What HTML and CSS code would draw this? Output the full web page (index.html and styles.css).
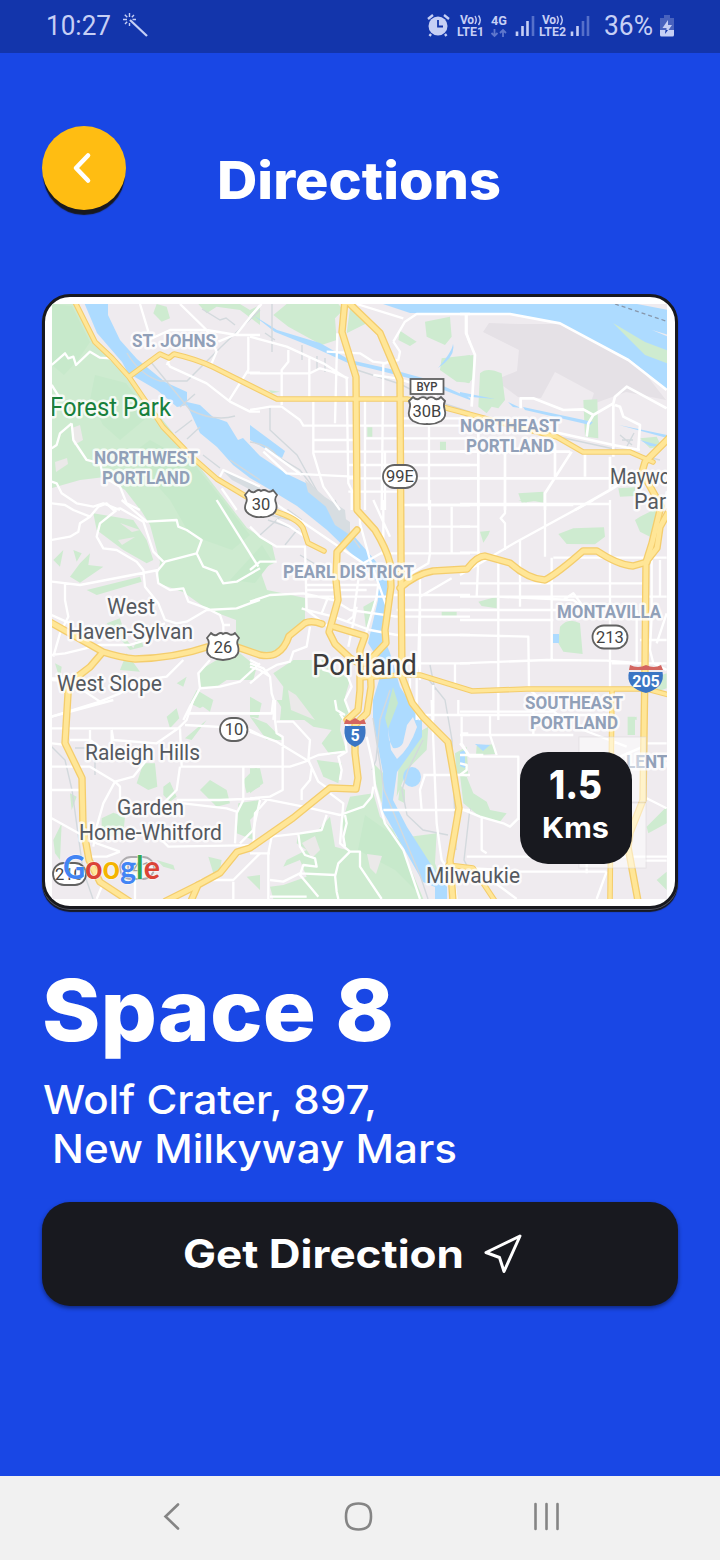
FILE: index.html
```html
<!DOCTYPE html>
<html lang="en">
<head>
<meta charset="utf-8">
<title>Directions</title>
<link rel="stylesheet" href="styles.css">
</head>
<body>
<div class="phone">
  <div class="status">
    <span class="clock"><svg width="66" height="30"><text x="0" y="24" textLength="65" lengthAdjust="spacingAndGlyphs">10:27</text></svg></span>
    <svg class="wand" width="28" height="28" viewBox="0 0 28 28"><path class="rays" d="M7.500 1v4M7.500 11v3M1 7.500h4M10.500 7.500H14M2.800 2.800l2.500 2.500M12 3 9.800 5.200M3 12l2.200-2.200"/><path class="stick" d="M8 8l17 16"/></svg>
    <svg class="indicators" width="250" height="53" viewBox="425 0 250 53">
      <g class="alarm"><circle cx="438" cy="26" r="9.500"/><path class="alarm-line" d="M428 19l5-4M449 19l-5-4M431 34l-1.500 2M445 34l1.500 2"/><path class="alarm-hand" d="M438 20v6.500h5"/></g>
      <g class="tiny"><text x="460" y="24" textLength="14">Vo</text><text x="457" y="36" textLength="27" lengthAdjust="spacingAndGlyphs">LTE1</text><text x="491" y="25" textLength="16" lengthAdjust="spacingAndGlyphs">4G</text><text x="542" y="24" textLength="14">Vo</text><text x="539" y="36" textLength="27" lengthAdjust="spacingAndGlyphs">LTE2</text></g>
      <path class="waves" d="M475 16q2.500 4 0 8M478.500 15.500q3.500 4.500 0 9.500M557 16q2.500 4 0 8M560.500 15.500q3.500 4.500 0 9.500"/>
      <path class="dim-line" d="M494.500 29v7M491.500 33l3 3 3-3M503 37v-7M500 33l3-3 3 3"/>
      <path class="bar" d="M517 36v-4.500M522.500 36V26M527.500 36V21M572 36v-4.500M577.500 36V26"/>
      <path class="bar dim" d="M533 36V16M583 36V21M588 36V16"/>
      <text class="percent" x="604" y="35" textLength="49" lengthAdjust="spacingAndGlyphs">36%</text>
      <path class="batt dim-fill" d="M664 15h6v3h4v12h-14V18h4z"/><path class="batt" d="M660 30h14v5q0 1.500-1.500 1.500h-11q-1.500 0-1.500-1.500z"/><path class="batt" d="M668 20l-5.500 8h4v2h2l3.500-5h-4z"/><path class="bolt-low" d="M665.500 30h2.500l-3 4z"/>
    </svg>
  </div>

  <header class="header">
    <button class="back" aria-label="Back"><svg width="30" height="40" viewBox="0 0 30 40"><path d="M20 7.500 8 20l12 12.500"/></svg></button>
    <h1 class="title"><svg width="300" height="70"><text x="0" y="47.500" textLength="284" lengthAdjust="spacingAndGlyphs">Directions</text></svg></h1>
  </header>

  <section class="card">
    <svg class="map" width="615" height="595" viewBox="52 304 615 595">
      <defs>
        <g id="freeways">
          <path d="M345 300 342 332 356 377 357 510 375 530Q386 548 390 563L391 587 385 630 386 643 370 660 371 687 367 713 355 725 355 753 358 778 356 789 330 788 293 818 250 848 237 852 220 873 198 885 191 901"/>
          <path d="M198 885 166 901M345 300 350 304 380 333 400 380 401 557 402 677 412 703 423 717 448 742 453 770 459 808 450 860 453 901"/>
          <path d="M400 588Q416 574 433 571L467 569Q477 556 485 556L510 563Q528 579 545 580 558 573 583 551H597Q618 565 633 566L647 562"/>
          <path d="M669 438 645 462 642 472 652 490 661 506 652 543 646 562 645 667 643 800 630 833 628 847 638 901"/>
          <path d="M669 511 660 527 657 548 646 562"/>
          <path d="M50 622 103 652Q122 658 135 659 175 658 207 647H237L260 655Q271 657 277 653 285 648 289 636L305 623Q312 620 322 624"/>
          <path d="M102 653 90 667 77 677Q68 685 68 694L65 743 82 778 83 827 89 860 100 882 129 901"/>
          <path d="M357 530 337 552 336 580 338 600 329 632 335 644 350 658 360 664 370 662M335 627 365 636 360 650 360 690 358 710 347 720"/>
        </g>
        <g id="arterials">
          <path d="M74 300 95 342 112 358 129 377 155 415 163 427 192 457 217 479 247 497M277 512Q298 519 303 528L308 543 324 551"/>
          <path d="M130 376 160 354 169 358 174 354Q196 359 213 367L277 399H407L435 405 517 427 557 437 583 452H630L653 462"/>
          <path d="M360 678 400 675 420 675 472 691 527 689H647L669 695M612 689 610 901M448 865 473 868 495 901"/>
        </g>
      </defs>
      <rect class="land" x="50" y="300" width="620" height="602"/>

      <path class="urban" d="M483 332 489 323 518 324 560 324 600 345 640 367 666 400 626 392 590 405 594 393 555 372 541 398 518 397 495 380 517 371 519 350z"/>

      <g class="park">
        <path d="M50 300H74L95 342 129 377 192 457 247 528 272 545 276 562 260 570 267 590 305 598 305 620 285 640 275 655 236 652 236 620 207 609 183 592 157 583 160 562 150 525 142 512 125 490 105 477 80 480 52 488z"/>
        <g transform="translate(40 290) scale(.3333)"><path d="M350 42 380 50 390 85 365 95 340 70zM475 42H600L630 60 660 45V105L600 60 530 50 500 70z"/></g>
        <g transform="translate(250 290) scale(.3333)"><path d="M70 75 110 42H265L280 60 255 85 260 150 215 165 115 110zM300 55 330 65 350 100 290 130zM525 95 600 80 605 140 585 165 530 140zM450 122 500 155 480 168 445 150zM575 205 660 195V278L620 275 570 240zM352 412h15v28h-15zM570 455h18v25h-18zM55 300 90 305 65 310z"/></g>
        <g transform="translate(460 290) scale(.3333)"><path d="M0 200 40 195 40 265 25 280 0 270zM60 250Q80 230 125 250L135 330 115 355 95 350 80 370 55 350zM370 330 412 328 415 445 375 440zM540 445 590 440 605 470 570 475zM175 610 250 605V630L185 638zM475 595 525 592V618L480 620z"/></g>
        <g transform="translate(40 500) scale(.3333)"><path d="M160 40 280 60 320 120 340 180 320 190 250 150 170 90zM40 180 70 150 60 200zM100 150 125 160 110 185zM90 230 120 190 150 160 145 195 190 200 120 248zM140 270 300 230 305 245 170 285zM200 370 240 355 260 420 280 445 300 400 310 440 270 450zM240 510 260 460 300 515zM480 510 530 480 600 460 650 500 640 540 560 540 530 560 480 560zM470 570 520 600 480 625 450 610zM45 490 65 500 60 540zM410 550 440 530 430 560z"/></g>
        <g transform="translate(250 500) scale(.3333)"><path d="M70 520 130 480 220 480 300 540 285 590 300 640 285 660H90L100 560zM0 590 35 610 25 655 0 650zM575 335 620 335V352L575 348zM340 320 375 300 350 400z"/></g>
        <g transform="translate(460 500) scale(.3333)"><path d="M295 102 340 85 432 82 435 110 405 133 320 132zM60 95 90 92 85 105 70 128zM55 305 110 290V325L65 318zM300 380Q325 350 360 370L368 462 310 455 295 430zM540 50 600 20 570 110 540 95 525 60zM590 530 620 520V565L590 575zM175 0H200V8zM505 655 530 650V660zM205 0H250V8z"/></g>
        <g transform="translate(40 700) scale(.3333)"><path d="M380 50 410 25 418 55 390 85zM310 190 345 190 352 260 325 270 290 250zM370 260 390 245 410 290 390 305 370 285zM185 355 220 338 255 350 250 400 210 410 185 380zM500 60 455 120 435 115zM510 240 560 270 570 310 530 320 480 270zM610 240 650 200 660 260 620 280zM595 310 660 300V330L630 360 640 420 590 400zM505 470 545 480 540 510 520 520zM620 530 660 525V570zM40 420 65 370 60 480 45 460zM90 280 110 290 95 330zM475 10 520 0 510 35zM350 480 400 495 405 510 370 500z"/></g>
        <g transform="translate(250 700) scale(.3333)"><path d="M80 0H280L270 90 290 155 240 165 215 130 245 90 190 80 150 50 100 30zM300 290 370 280 390 350 430 390 480 500 520 597H70L60 560 100 555 170 530 150 480 100 500 110 480 170 450 140 430 145 400 200 395 240 350 255 440 290 450 275 370zM200 180 275 190 265 250 220 230zM0 205 30 205 40 250 0 280zM0 50 50 70 100 120 50 120zM480 410 560 400 555 490 570 530 540 530zM500 100 535 80 530 150 480 200 460 240 440 290 445 210zM370 190 400 220 395 310 375 240zM450 255 465 270 465 310 445 300zM615 160 650 140 655 230 620 220z"/></g>
        <g transform="translate(460 700) scale(.3333)"><path d="M0 225 20 230 40 280 80 305 90 330 140 340 120 365 60 350 10 310zM50 138 100 133 105 162 48 165zM503 50 525 50V105H503zM560 380 620 320V370L565 400zM590 540 620 515V570z"/></g>
      </g>
      <g class="forest">
        <path d="M50 304 72 306 90 342 78 360 64 375 52 365zM95 375 126 383 150 415 120 440 103 425 90 400zM130 455 150 440 195 465 250 535 232 550 190 535 170 500zM230 580 262 545 272 561 255 583zM365 815 400 840 420 895 395 870 358 850z"/>
      </g>
      <g class="cutout"><path d="M72 428 80 425 83 440 74 445zM55 462 67 458 68 464 56 472zM367 854 382 856 376 874 370 868zM288 690 296 695 315 720 291 710zM302 843 315 836 320 850 312 858zM120 523 140 530 132 532zM118 540 135 537 122 545z"/></g>

      <g class="water">
        <path d="M83 300 97 333 122 362 128 373 157 390 177 407 187 405 200 433 217 447 233 465 250 478 274 492 297 506 327 530 360 562 378 583V600L368 643 383 667 373 700V720L383 773 382 810 423 882 435 887V901H447V887L430 863 407 827 393 800 397 772 422 737V715L417 713 400 687 390 653 382 633 387 600 388 577 373 558 347 528 327 504 310 485 287 474 260 456 243 438 238 440 227 422 213 417 200 405 187 402V392L165 382 137 359 120 340 108 315V300z"/>
        <path d="M250 425 285 451 282 458 250 440zM383 300V304L410 313H470L510 314 560 323 630 360 669 391V322L667 304V300z"/>
        <path d="M253 315 277 330 320 343 350 360 390 369 430 380 470 398 470 400 420 381 385 372 348 363 315 348 275 332zM438 368Q452 352 453 344 456 356 438 368zM523 407 593 422 590 425 525 410zM619 425 667 435V438zM640 440 666 447 650 446zM460 392 495 399 460 396zM508 402 521 408 513 407z"/>
        <ellipse cx="412" cy="777" rx="9" ry="10"/><path d="M553 634h6v9h-6zM460 752 465 750V768L460 766zM460 758V768M475 744 490 745 483 751zM461 755 463 754"/>
      </g>
      <path class="isle" d="M393 687 398 703 388 729 385 718z"/><path class="land" d="M388 728 389 740 393 748Q400 749 403 743L407 725 413 717 417 727Q410 748 397 759L391 750z"/>
      <path class="park" d="M613 323 645 342 669 351V364L645 355z"/>
      <path class="land" d="M637 304 669 310V300zM652 330 669 337V335z"/><path class="dash" d="M615 304 669 322"/>

      <g class="grey">
        <path d="M127 353Q140 375 160 381H187L221 347 260 310M202 309 220 320 226 318 235 325M180 407 195 394M200 427 187 439M203 455 220 468M175 433 192 420M230 460 260 480M150 361 190 410Q215 422 235 416"/>
        <path d="M272 300V352M265 333 275 340M302 345V360M250 442Q270 445 277 456L300 470 315 490 335 515 347 530 360 548M270 408V430L297 455 322 500 340 510M325 358V372M317 356V370M357 370 400 384 430 399 470 412M250 510 290 520M268 520 297 530 285 545M260 535 288 510 302 520M300 555 325 570M335 500 350 537"/>
        <path d="M541 433 605 447 660 460M620 435 632 445M634 433 626 448M622 440H633M425 675 445 700 452 740 456 850M423 740 408 770 402 790 407 815 423 830 448 835M430 665 435 690M390 690 380 720 376 760 372 770M470 808 464 860 472 875M373 718 384 790 420 875 428 899M40 735 65 760 72 790 83 870 93 899M75 748H95V775"/>
      </g>
      <path class="yards" d="M305 480 325 497 345 510 347 530 330 510 308 492zM222 470 260 487V495L232 480zM325 505 350 522 350 535 335 525z"/>

      <g class="street" transform="translate(40 290) scale(.3333)"><path d="M300 42 325 125M420 42 500 120 530 185 515 220M325 150 390 120 500 120 590 135H660M535 155 590 132 660 45M625 140V240L565 335M620 248H660M382 215 390 230 500 280 570 335 630 365H660M380 225 395 200M35 225 75 190 85 205 100 200 108 225 150 185 180 203 210 205 240 230M35 285 60 325M95 400 60 430 50 465 35 475M95 400 100 450 140 510 180 520 190 560 240 590 260 640 300 660M540 560 550 540 660 590M545 595 590 660M35 575 50 580 65 610 110 640 160 650 190 640 240 660"/></g>
      <g class="street" transform="translate(250 290) scale(.3333)"><path d="M0 80 35 42M0 140 110 170 220 220 290 265 295 580 305 600V660M320 42 460 85M430 155 465 95 500 72H660M430 155 450 185 445 210 400 220 395 660M115 180V215L95 240V345M178 205V320M0 250H180L210 235 245 245 295 265M262 130 255 400M230 185 330 190 370 215 410 220M370 255 440 265 520 290 560 320M650 70V130L660 160M0 360 60 350 95 350 150 390 160 407H295M190 335V490L220 590 270 660M220 407H660M190 450H310M190 485H660M295 525H660M295 565H660M295 605H450M40 485 110 550 310 560M45 475 155 555M345 330V660M405 485V660M537 400V660M480 645H660M345 445H660M450 385H660"/></g>
      <g class="street wide" transform="translate(460 290) scale(.3333)"><path d="M0 72H150L300 100 505 210 620 300M18 75V130L45 195 35 350M182 355V325L220 325 310 360 370 358 400 375 460 340 465 320 500 290 620 355M400 375 385 400 380 440M465 345 480 350 490 380 540 405 535 475M460 340V500M160 405 300 430 460 465 540 480M0 485H330M335 485 255 610V660M55 430V660M135 480V660M285 460V560M0 525H55M0 565H460M0 645H340M375 490V560M450 500V600M345 660 450 600 475 585"/></g>
      <g class="street" transform="translate(40 500) scale(.3333)"><path d="M35 10 75 15 100 30 150 50 120 70 115 95 90 110 35 120M150 50 175 20 200 10 220 30 240 25 285 50 310 65 325 110 340 155 370 185M230 30 180 70 170 110 190 145 230 150 290 185 310 210 315 260 355 310 375 360M245 0 320 65 410 60 415 80 440 90 485 120 470 160 375 185 350 215 355 250 390 270 430 265 445 305 500 325 540 345 550 375M470 160 490 200 530 215 550 250 590 245 660 205M375 360 410 370 440 365 500 330 590 325 630 310 660 300M35 245 120 255 355 210M75 250V300L85 350 60 400 40 470M35 465 75 460 180 435 270 435 320 420 320 390 375 370M35 345 90 370M35 535 75 535 180 605 240 580 310 540 380 530 430 480M35 650 180 605M510 480 475 520 480 565 540 560 600 545 660 490M480 565 450 620 430 660M440 640H660M570 375 550 375V395M35 540 120 545M630 480 660 495"/><path d="M530 0 655 200"/></g>
      <g class="street" transform="translate(250 500) scale(.3333)"><path d="M0 210 30 185 80 185M0 305 60 285 160 280 250 300 300 330 440 350M0 80 30 110 80 140 165 140 170 330 235 380M60 0 340 190 410 150 M80 60 120 80 165 110M330 0V70L360 180 385 250 380 290 345 410M370 0 420 110M400 0V160M170 255H390M170 270H350M170 290H430M170 330 250 350 360 390 440 405M155 325 170 330M235 290 215 340M325 240 310 350 290 365M320 320 295 440M385 250 410 320M390 160H660M450 15H660M450 80H660M540 0V160L535 190 450 240M605 20V160M430 285H660M440 330H660M430 350H660M440 405H660M420 490H660M510 220V540M510 290 605 235M500 520 505 480 510 300M615 490V550M0 550 35 520 80 495 120 485 130 455 170 440 180 380M0 490 40 505 60 530 65 580 75 610 70 660M210 480 220 510 260 520 290 520 305 560 285 600 300 640 280 660M60 530 30 510 0 500M0 640H75M480 535V600L510 660M550 555V660M500 520V660"/></g>
      <g class="street" transform="translate(460 500) scale(.3333)"><path d="M0 12H450M0 80H55M55 0V180L50 290M115 170V660M135 0V40L122 55 135 70V150M255 0V170M450 0V660M180 120V320M0 225 170 125 400 0M0 158H60M280 173H620M275 173V480M0 250H550M0 290H620M0 330H290M0 360H280M110 290 340 300 380 330M0 405 205 410 207 560M0 490 260 480 440 482 550 490H620M530 330V490M540 420H620M575 180V350L570 450 580 490 620 510M620 340 590 430M0 635H280M210 570 310 660M455 490 590 490M600 180V290M310 300 340 280 370 320"/></g>
      <g class="street" transform="translate(40 700) scale(.3333)"><path d="M35 50 220 0M35 85H415L440 60 460 0M150 90V130M215 90 220 120 350 130 415 85M445 40H660M420 85 425 200H660M435 75 620 85 660 105M420 200 410 270 370 310 340 340M35 200 150 200 225 245 190 310 170 380 160 440M225 245 280 230 320 180M225 245 240 260 240 300M35 270H120M35 355 170 430 240 455M610 200V300L590 340 585 430M440 300 540 300 660 295M365 420 385 440 660 435M430 310 560 325 590 335M35 130 80 135M150 120 190 150M580 545V597M480 540 580 540 660 460M285 520V597M185 560 170 597M410 300 440 300M660 300 640 390 600 430M240 455 200 470 150 470M90 120H150M215 90V130"/></g>
      <g class="street" transform="translate(250 700) scale(.3333)"><path d="M0 40H65L70 0M75 0V60L80 100 98 110V270L60 290 0 295M0 95 80 125 170 180 205 165 285 155M80 65H130L180 120 175 180 205 245 240 270M0 200H120L180 180M185 205 180 240 155 270V300M35 295 160 320 270 345 340 320 365 290 370 260M50 300 15 340 10 440M240 280 280 310 270 430 300 455 330 455V500L395 597M285 345 290 370 280 410 285 440M230 345 215 390 150 400 65 410 55 460V597M0 460H60M145 400 150 440 165 465 195 475 200 500 160 495 150 525 180 560 205 590M60 540 100 545 150 520 255 525 260 575 265 597M300 455 265 490 255 530M285 45 260 30 255 0M270 40 300 90 285 105 290 155 265 170 275 210 270 240M350 110 370 200 375 260 405 370 460 450 510 597M400 330H660M510 45H660M625 0V45M635 50V130L660 170M545 0 560 370 575 480 610 530 620 597M655 100H635M520 225H660M525 225 510 270 515 330M60 590H170"/></g>
      <g class="street" transform="translate(460 700) scale(.3333)"><path d="M0 45H460M220 0V105M0 105H340M90 45V105L110 165M0 130 30 170H175V360M0 165 70 165M0 190 20 195V210L0 225M0 325 60 350 130 370 150 380 175 355M65 350V450L80 460M20 470H660M40 505 130 510 160 515H440M380 480V520M440 515 410 597M460 0V150M560 130H620M560 295 620 325M555 482H620M40 500 170 597M480 170 550 140M370 90 500 140M0 525H80"/></g>

      <use href="#arterials" class="case thin-case"/><use href="#freeways" class="case"/>
      <use href="#arterials" class="road thin-road"/><use href="#freeways" class="road"/>

      <g class="label area"><text x="132" y="347" textLength="84" lengthAdjust="spacingAndGlyphs">ST. JOHNS</text><text x="94" y="464" textLength="104" lengthAdjust="spacingAndGlyphs">NORTHWEST</text><text x="102" y="484" textLength="88" lengthAdjust="spacingAndGlyphs">PORTLAND</text><text x="460" y="432" textLength="100" lengthAdjust="spacingAndGlyphs">NORTHEAST</text><text x="466" y="452" textLength="88" lengthAdjust="spacingAndGlyphs">PORTLAND</text><text x="283" y="578" textLength="131" lengthAdjust="spacingAndGlyphs">PEARL DISTRICT</text><text x="557" y="618" textLength="104" lengthAdjust="spacingAndGlyphs">MONTAVILLA</text><text x="525" y="709" textLength="98" lengthAdjust="spacingAndGlyphs">SOUTHEAST</text><text x="530" y="729" textLength="88" lengthAdjust="spacingAndGlyphs">PORTLAND</text><text x="626" y="768" textLength="52" lengthAdjust="spacingAndGlyphs">LENTS</text></g>
      <g class="label town"><text x="107" y="614" textLength="48" lengthAdjust="spacingAndGlyphs">West</text><text x="68" y="639" textLength="125" lengthAdjust="spacingAndGlyphs">Haven-Sylvan</text><text x="57" y="691" textLength="105" lengthAdjust="spacingAndGlyphs">West Slope</text><text x="85" y="760" textLength="115" lengthAdjust="spacingAndGlyphs">Raleigh Hills</text><text x="117" y="815" textLength="67" lengthAdjust="spacingAndGlyphs">Garden</text><text x="79" y="840" textLength="143" lengthAdjust="spacingAndGlyphs">Home-Whitford</text><text x="426" y="883" textLength="94" lengthAdjust="spacingAndGlyphs">Milwaukie</text><text x="610" y="484" textLength="82" lengthAdjust="spacingAndGlyphs">Maywood</text><text x="634" y="509" textLength="43" lengthAdjust="spacingAndGlyphs">Park</text></g>
      <text class="label woods" x="50" y="416" textLength="121" lengthAdjust="spacingAndGlyphs">Forest Park</text>
      <text class="label city" x="312" y="675" textLength="105" lengthAdjust="spacingAndGlyphs">Portland</text>

      <g class="shield">
        <rect x="410.500" y="379" width="33" height="15"/>
        <rect x="383" y="465" width="34" height="23" rx="11.500"/><rect x="592.500" y="625.500" width="35" height="23" rx="11.500"/><rect x="220" y="718" width="27.500" height="23" rx="11.500"/><rect x="53" y="863" width="33" height="22" rx="11"/><rect class="faded" x="120" y="857" width="34" height="22" rx="11"/>
        <path d="M413 397Q417 401 420 398 424 396 427 399 430 396 434 398 437 401 441 397L445 401Q443 405 444.500 409 447 417 441 421 434 425 427 424 420 425 413 421 407 417 409.500 409 411 405 409 401z"/>
        <path d="M249 490Q253 494 256 491 259 489 261 491 264 489 267 491 270 493 273 490L277 495Q274 499 276 503 278 510 273 514 267 518 261 517 255 518 249 514 243 510 246 503 248 499 245 495z"/>
        <path d="M211 633Q215 637 218 634 221 632 223 634 226 632 229 634 232 636 235 633L239 638Q236 642 238 646 240 653 235 657 229 660 223 660 217 660 211 657 205 653 208 646 210 642 207 638z"/>
      </g>
      <g class="num"><text x="427" y="391" class="byp" textLength="21" lengthAdjust="spacingAndGlyphs">BYP</text><text x="427" y="417">30B</text><text x="400" y="482">99E</text><text x="261" y="510">30</text><text x="223" y="653">26</text><text x="610" y="643">213</text><text x="234" y="735">10</text><text x="69" y="880">210</text><text class="faded" x="137" y="874">141</text></g>
      <g class="interstate">
        <path class="blue" d="M629 672H662.500Q664 679 660 685 654 691 646 693 637 691 631 685 627 679 629 672z"/><path class="red" d="M630 665Q638 669 646 665 654 669 661 665L663 670H629z"/><text x="646" y="686.500">205</text>
        <path class="blue" d="M345 726H365Q368 742 355 747 342 742 345 726z"/><path class="red" d="M346 719 350 721 355 718 360 721 364 719 366 724H344z"/><text x="355" y="741">5</text>
      </g>
      <g class="zoom-box"><rect x="579" y="737" width="67" height="65"/><rect x="579" y="803" width="67" height="65"/></g>
      <text class="logo" x="63" y="879" textLength="97" lengthAdjust="spacingAndGlyphs"><tspan class="g-blue">G</tspan><tspan class="g-red">o</tspan><tspan class="g-yellow">o</tspan><tspan class="g-blue">g</tspan><tspan class="g-green">l</tspan><tspan class="g-red">e</tspan></text>
    </svg>
    <div class="distance"><svg width="112" height="112" viewBox="520 752 112 112"><text class="dist-value" x="549" y="799" textLength="53" lengthAdjust="spacingAndGlyphs">1.5</text><text class="dist-unit" x="542" y="838" textLength="67" lengthAdjust="spacingAndGlyphs">Kms</text></svg></div>
  </section>

  <section class="place">
    <h2><svg width="400" height="110"><text x="0" y="71" textLength="352" lengthAdjust="spacingAndGlyphs">Space 8</text></svg></h2>
    <p><svg width="440" height="110"><text x="1" y="40" textLength="334" lengthAdjust="spacingAndGlyphs">Wolf Crater, 897,</text><text x="10" y="89" textLength="405" lengthAdjust="spacingAndGlyphs">New Milkyway Mars</text></svg></p>
  </section>

  <button class="cta"><svg width="284" height="50"><text x="0" y="39" textLength="281" lengthAdjust="spacingAndGlyphs">Get Direction</text></svg><svg class="send" width="44" height="44" viewBox="0 0 44 44"><path d="M39 4 5 20.500l13.500 5L23 39.500z"/></svg></button>

  <nav class="nav"><svg width="720" height="84" viewBox="0 1476 720 84"><path d="M178 1504.500 165.500 1516.500 178 1528.500"/><path d="M358.500 1503.500q6 0 9.500 3 3 3 3 10t-3 10q-3.500 3-9.500 3t-9.500-3q-3-3-3-10t3-10q3.500-3 9.500-3z"/><path d="M535.500 1504v25M546.500 1504v25M557.500 1504v25"/></svg></nav>
</div>
</body>
</html>
```
FILE: styles.css
```css
* { box-sizing: border-box; }
body { margin: 0; font-family: Inter, "Open Sans", sans-serif; }
svg { display: block; flex: none; }
button { border: 0; padding: 0; font: inherit; }
h1, h2, p { margin: 0; }
.phone { width: 720px; height: 1560px; background: #1947e5; display: flex; flex-direction: column; overflow: hidden; }

.status { flex: none; height: 53px; background: #1335ab; display: flex; align-items: flex-start; padding-left: 46px; font-family: Roboto, sans-serif; fill: #c6cff5; }
.clock { padding-top: 11px; font-size: 27px; }
.wand { margin: 12px 0 0 10px; fill: none; stroke: #c6cff5; }
.rays { stroke-width: 1.4; }
.stick { stroke-width: 2.3; }
.indicators { margin-left: 275px; }
.alarm-line, .alarm-hand, .waves, .dim-line { fill: none; stroke: #c6cff5; stroke-width: 1.8; }
.alarm-line { stroke-width: 2.4; }
.alarm-hand { stroke: #1335ab; }
.tiny { font-size: 12px; font-weight: 700; }
.waves { stroke-width: 1.4; }
.dim-line { stroke: #5f77cc; }
.bar { stroke: #c6cff5; stroke-width: 2.6; }
.dim { stroke: #5670ca; }
.percent { font-size: 27px; }
.dim-fill { fill: #4862be; }
.bolt-low { fill: #1335ab; }

.header { flex: none; height: 241px; padding: 73px 42px 0; display: flex; }
.back { flex: none; width: 84px; height: 84px; border-radius: 50%; background: #ffbd12; box-shadow: 0 6px 1px -1px #18191f; display: flex; align-items: center; justify-content: center; }
.back svg { fill: none; stroke: #fff; stroke-width: 4.6; stroke-linecap: round; stroke-linejoin: round; margin-right: 3px; }
.title { margin: 25px 0 0 91px; font-size: 52px; font-weight: 800; fill: #fff; }

.card { position: relative; flex: none; width: 636px; height: 615px; margin: 0 42px 1px; padding: 7px; border: 3px solid #18191f; border-radius: 28px; background: #fff; box-shadow: 0 1px 0 #555866, 0 3px 1px #18191f; }
.distance { position: absolute; right: 43px; bottom: 42px; width: 112px; height: 112px; border-radius: 28px; background: #18191f; fill: #fff; }
.dist-value { font-size: 40px; font-weight: 800; }
.dist-unit { font-size: 29px; font-weight: 700; }

.land { fill: #efebef; }
.urban { fill: #e5e1e6; }
.park { fill: #ceebd0; }
.forest { fill: #c7e9cb; }
.cutout { fill: #ebe9e9; }
.isle { fill: #c6e8cd; }
.water { fill: #addbff; }
.dash { fill: none; stroke: #8797ab; stroke-width: 1.3; stroke-dasharray: 4 3; }
.grey { fill: none; stroke: #d3d9dd; stroke-width: 1.4; }
.yards { fill: #d7dde1; }
.street { fill: none; stroke: #fff; stroke-width: 7; stroke-linejoin: round; }
.wide { stroke-width: 8; }
.case, .road { fill: none; stroke-linejoin: round; stroke-linecap: round; }
.case { stroke: #f4cd6c; stroke-width: 7.4; }
.road { stroke: #ffe697; stroke-width: 4.8; }
.thin-case { stroke-width: 5.6; }
.thin-road { stroke-width: 3.5; }
.label { font-family: Roboto, sans-serif; paint-order: stroke; stroke: #fffc; stroke-width: 5px; stroke-linejoin: round; }
.area { font-size: 17.500px; font-weight: 700; fill: #91a0b8; }
.town { font-size: 22px; fill: #55595f; }
.woods { font-size: 25px; fill: #18803b; }
.city { font-size: 29px; fill: #3c3c3c; }
.shield { fill: #fff; stroke: #626262; stroke-width: 1.8; }
.num { font: 16.500px Roboto, sans-serif; fill: #424242; text-anchor: middle; }
.faded { opacity: .45; }
.byp { font-size: 12.500px; font-weight: 500; }
.interstate text { font: 700 16px Roboto, sans-serif; fill: #fff; text-anchor: middle; }
.blue { fill: #3b76c4; }
.red { fill: #d36560; }
.zoom-box { fill: #fff; fill-opacity: .5; stroke: #d8d5d8; stroke-opacity: .5; }
.logo { font: 700 33px Lato, sans-serif; paint-order: stroke; stroke: #fff9; stroke-width: 1.5px; }
.g-blue { fill: #4285f4; }
.g-red { fill: #db4437; }
.g-yellow { fill: #f4b400; }
.g-green { fill: #34a853; }

.place { flex: none; height: 292px; padding: 60px 42px 0; fill: #fff; }
.place h2 { height: 90px; font-size: 85px; font-weight: 800; }
.place p { margin-top: 14px; font-size: 39.500px; font-weight: 500; }
.cta { flex: none; width: 636px; height: 104px; margin: 0 42px; padding-left: 141px; border-radius: 28px; background: #18191f; box-shadow: 0 2px 4px #0007; display: flex; align-items: center; gap: 14px; font-size: 39px; font-weight: 700; fill: #fff; }
.send { fill: none; stroke: #fff; stroke-width: 3; stroke-linejoin: round; }
.nav { flex: none; margin-top: auto; height: 84px; background: #f1f1f1; }
.nav svg { fill: none; stroke: #858585; stroke-width: 2.600; stroke-linecap: round; }
```
